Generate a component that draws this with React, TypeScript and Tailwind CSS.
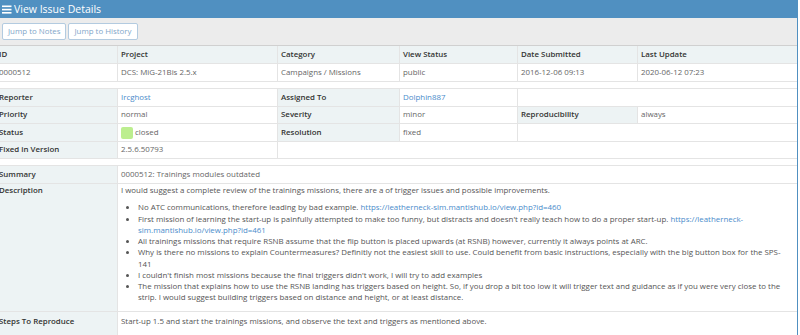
import React from "react";

const Label = ({ children, className = "" }: { children?: React.ReactNode; className?: string }) => (
  <div className={`bg-[#edf3f4] px-[3px] flex items-center font-semibold text-[#333] whitespace-nowrap ${className}`}>{children}</div>
);
const Val = ({ children, className = "" }: { children?: React.ReactNode; className?: string }) => (
  <div className={`bg-white px-[3px] flex items-center text-[#666] whitespace-nowrap ${className}`}>{children}</div>
);
const Link = ({ children }: { children: React.ReactNode }) => <span className="text-[#4a8ccb]">{children}</span>;

export default function App() {
  const grid = "grid grid-cols-[121px_159px_121px_117px_119px_159px] gap-px bg-[#e4e4e4]";
  return (
    <div className="w-[800px] h-[335px] overflow-hidden bg-white font-['Open_Sans',sans-serif] text-[7.9px] leading-[11.25px]">
      <div className="-ml-[5px] w-[803px] border-x border-[#5090c1] bg-white h-[340px]">
        <div className="h-[18px] bg-[#5090c1] pl-[6px] flex items-center text-white">
          <svg width="10" height="9" viewBox="0 0 10 9" className="mr-[2px]">
            <rect x="0" y="0.5" width="9.5" height="1.6" fill="white" />
            <rect x="0" y="3.8" width="9.5" height="1.6" fill="white" />
            <rect x="0" y="7" width="9.5" height="1.6" fill="white" />
          </svg>
          <span className="text-[10.5px] leading-[18px]">View Issue Details</span>
        </div>
        <div className="h-[28px] bg-[#ececec] pl-[6px] pt-[5px] flex items-start gap-[2px] border-b border-[#d0d0d0]">
          <button className="h-[17px] px-[5px] bg-white border border-[#b3cbe0] rounded-[2px] text-[#7fa6c9] leading-none">Jump to Notes</button>
          <button className="h-[17px] px-[5px] bg-white border border-[#b3cbe0] rounded-[2px] text-[#7fa6c9] leading-none">Jump to History</button>
        </div>

        <div className={`${grid} grid-rows-[17px_17px] border-b border-[#e4e4e4]`}>
          <Label>ID</Label>
          <Label>Project</Label>
          <Label>Category</Label>
          <Label>View Status</Label>
          <Label>Date Submitted</Label>
          <Label>Last Update</Label>
          <Val>0000512</Val>
          <Val>DCS: MiG-21Bis 2.5.x</Val>
          <Val>Campaigns / Missions</Val>
          <Val>public</Val>
          <Val>2016-12-06 09:13</Val>
          <Val>2020-06-12 07:23</Val>
        </div>
        <div className="h-[7px] bg-white border-b border-[#e4e4e4]" />
        <div className={`${grid} grid-rows-[17px_16px_17px_16px] border-b border-[#e4e4e4]`}>
          <Label>Reporter</Label>
          <Val><Link>Ircghost</Link></Val>
          <Label>Assigned To</Label>
          <Val><Link>Dolphin887</Link></Val>
          <Val className="col-span-2" />
          <Label>Priority</Label>
          <Val>normal</Val>
          <Label>Severity</Label>
          <Val>minor</Val>
          <Label>Reproducibility</Label>
          <Val>always</Val>
          <Label>Status</Label>
          <Val>
            <span className="inline-block w-[12px] h-[12px] rounded-[2px] bg-[#bcee8f] mr-[2px]" />
            closed
          </Val>
          <Label>Resolution</Label>
          <Val>fixed</Val>
          <Val className="col-span-2" />
          <Label>Fixed in Version</Label>
          <Val>2.5.6.50793</Val>
          <Val className="col-span-4" />
        </div>
        <div className="h-[7px] bg-white border-b border-[#e4e4e4]" />
        <div className={`${grid} grid-rows-[17px_127px_40px]`}>
          <Label>Summary</Label>
          <Val className="col-span-5">0000512: Trainings modules outdated</Val>
          <div className="bg-[#edf3f4] px-[3px] pt-[1px] font-semibold text-[#333]">Description</div>
          <div className="col-span-5 bg-white px-[3px] pt-[1px] text-[#555] whitespace-nowrap">
            <p className="mb-[6px]">I would suggest a complete review of the trainings missions, there are a of trigger issues and possible improvements.</p>
            <ul className="list-disc pl-[17px]">
              <li>No ATC communications, therefore leading by bad example. <Link>https://leatherneck-sim.mantishub.io/view.php?id=460</Link></li>
              <li>First mission of learning the start-up is painfully attempted to make too funny, but distracts and doesn't really teach how to do a proper start-up. <Link>https://leatherneck-</Link><br /><Link>sim.mantishub.io/view.php?id=461</Link></li>
              <li>All trainings missions that require RSNB assume that the flip button is placed upwards (at RSNB) however, currently it always points at ARC.</li>
              <li>Why is there no missions to explain Countermeasures? Definitly not the easiest skill to use. Could benefit from basic instructions, especially with the big button box for the SPS-<br />141</li>
              <li>I couldn't finish most missions because the final triggers didn't work, I will try to add examples</li>
              <li>The mission that explains how to use the RSNB landing has triggers based on height. So, if you drop a bit too low it will trigger text and guidance as if you were very close to the<br />strip. I would suggest building triggers based on distance and height, or at least distance.</li>
            </ul>
          </div>
          <div className="bg-[#edf3f4] px-[3px] pt-[4px] font-semibold text-[#333]">Steps To Reproduce</div>
          <div className="col-span-5 bg-white px-[3px] pt-[4px] text-[#555] whitespace-nowrap">Start-up 1.5 and start the trainings missions, and observe the text and triggers as mentioned above.</div>
        </div>
      </div>
    </div>
  );
}
